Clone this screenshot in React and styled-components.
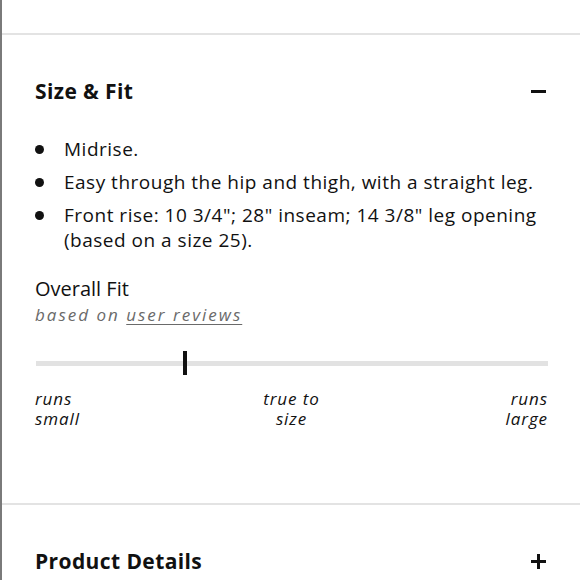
import React from "react";
import styled, { createGlobalStyle } from "styled-components";

const GlobalStyle = createGlobalStyle`
  html, body {
    margin: 0;
    padding: 0;
    background: #ffffff;
  }
  body {
    font-family: "Open Sans", Lato, sans-serif;
    color: #111;
  }
`;

const Page = styled.div`
  width: 580px;
  height: 580px;
  overflow: hidden;
  border-left: 2px solid #7a7a7a;
  box-sizing: border-box;
  display: flex;
  flex-direction: column;
`;

const TopGap = styled.div`
  height: 33px;
  border-bottom: 2px solid #e3e3e3;
  flex-shrink: 0;
`;

const Section = styled.section`
  padding: 0 32px 0 33px;
  border-bottom: ${(p) => (p.$divider ? "2px solid #e3e3e3" : "none")};
  flex-shrink: 0;
`;

const Header = styled.div`
  box-sizing: border-box;
  display: flex;
  align-items: center;
  justify-content: space-between;
  height: 76px;
  padding-top: 36px;
`;

const Title = styled.h2`
  margin: 0;
  font-size: 21px;
  font-weight: 700;
  letter-spacing: 0.4px;
`;

const Toggle = styled.span`
  position: relative;
  width: 15px;
  height: 15px;
  margin-right: 2px;

  &::before {
    content: "";
    position: absolute;
    left: 0;
    top: 6px;
    width: 15px;
    height: 3px;
    background: #111;
  }

  &::after {
    content: "";
    display: ${(p) => (p.$open ? "none" : "block")};
    position: absolute;
    left: 6px;
    top: 0;
    width: 3px;
    height: 15px;
    background: #111;
  }
`;

const List = styled.ul`
  list-style: none;
  margin: 26px 0 0;
  padding: 0;
  display: flex;
  flex-direction: column;
  gap: 8px;
`;

const Item = styled.li`
  position: relative;
  padding-left: 29px;
  font-size: 19px;
  line-height: 25px;
  letter-spacing: 0.5px;

  &::before {
    content: "";
    position: absolute;
    left: 0;
    top: 8px;
    width: 9px;
    height: 9px;
    border-radius: 50%;
    background: #111;
  }
`;

const FitBlock = styled.div`
  margin-top: 24px;
`;

const FitTitle = styled.div`
  font-size: 20px;
  line-height: 24px;
`;

const FitSub = styled.div`
  font-size: 17px;
  line-height: 23px;
  font-style: italic;
  color: #6a6a6a;
  letter-spacing: 2px;
  margin-top: 2px;

  a {
    color: #6a6a6a;
    text-decoration: underline;
    text-underline-offset: 3px;
  }
`;

const Track = styled.div`
  position: relative;
  margin: 35px 0 0 1px;
  height: 5px;
  background: #e2e2e2;
`;

const Marker = styled.div`
  position: absolute;
  top: -10px;
  width: 4px;
  height: 24px;
  background: #111;
  transform: translateX(-50%);
`;

const Labels = styled.div`
  display: flex;
  justify-content: space-between;
  margin-top: 23px;
  padding-bottom: 74px;
`;

const Label = styled.div`
  font-size: 17px;
  line-height: 20px;
  font-style: italic;
  letter-spacing: 0.9px;
  text-align: ${(p) => p.$align};
  width: 80px;
`;

export default function App() {
  const fit = 0.291;
  return (
    <>
      <GlobalStyle />
      <Page>
        <TopGap />
        <Section $divider>
          <Header>
            <Title>Size &amp; Fit</Title>
            <Toggle $open />
          </Header>
          <List>
            <Item>Midrise.</Item>
            <Item>Easy through the hip and thigh, with a straight leg.</Item>
            <Item>
              Front rise: 10 3/4"; 28" inseam; 14 3/8" leg opening (based on a
              size 25).
            </Item>
          </List>
          <FitBlock>
            <FitTitle>Overall Fit</FitTitle>
            <FitSub>
              based on <a>user reviews</a>
            </FitSub>
            <Track>
              <Marker style={{ left: `${fit * 100}%` }} />
            </Track>
            <Labels>
              <Label $align="left">
                runs
                <br />
                small
              </Label>
              <Label $align="center">
                true to
                <br />
                size
              </Label>
              <Label $align="right">
                runs
                <br />
                large
              </Label>
            </Labels>
          </FitBlock>
        </Section>
        <Section>
          <Header>
            <Title>Product Details</Title>
            <Toggle />
          </Header>
        </Section>
      </Page>
    </>
  );
}
